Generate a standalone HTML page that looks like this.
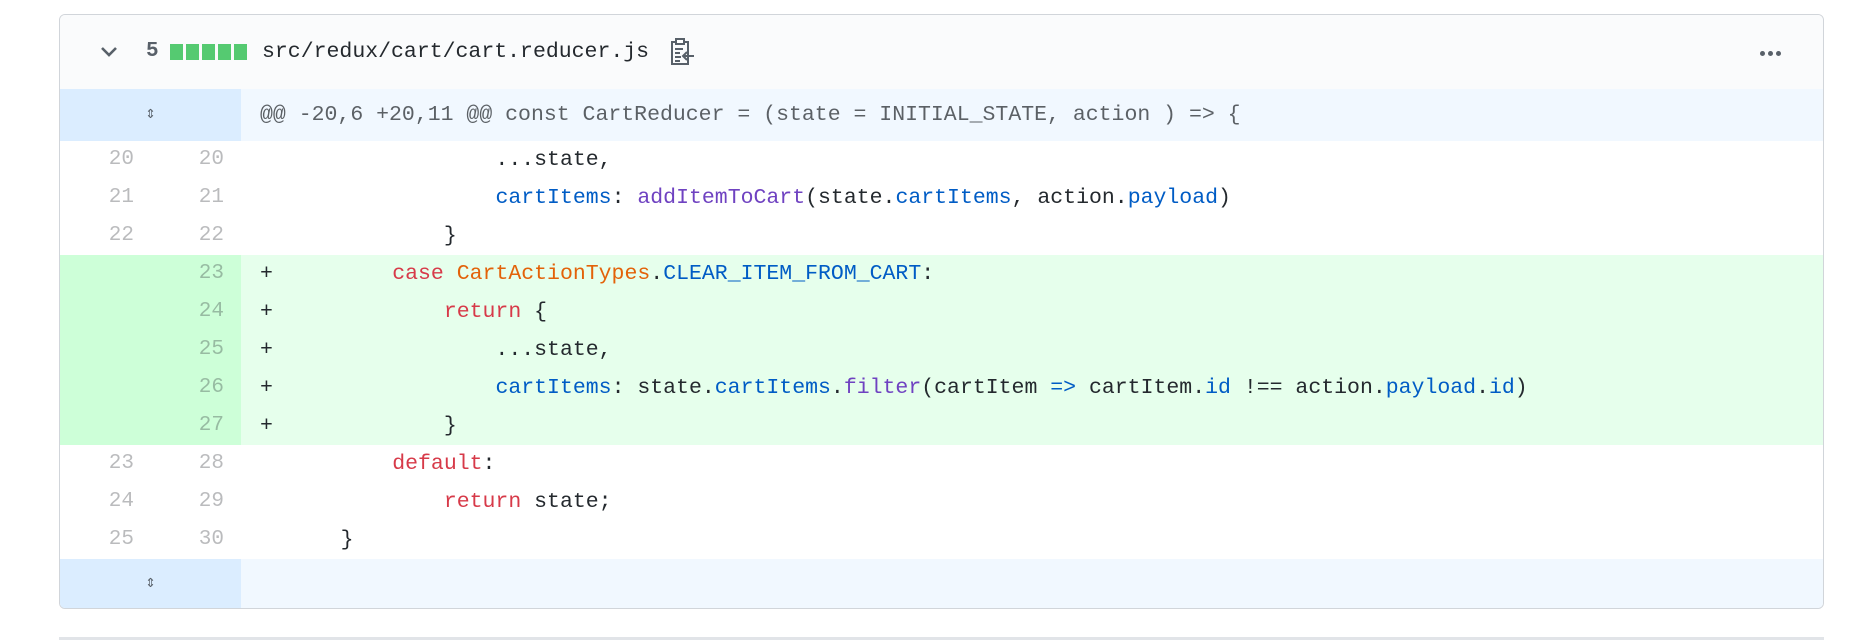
<!DOCTYPE html>
<html><head><meta charset="utf-8"><style>
body{margin:0;width:1864px;height:640px;background:#fff;position:relative;overflow:hidden;font-family:"Liberation Mono",monospace;}
.box{position:absolute;left:59px;top:14px;width:1763px;height:593px;border:1px solid #d1d5da;border-radius:6px;overflow:hidden;}
.hdr{position:absolute;left:0;top:0;right:0;height:74px;background:#fafbfc;border-bottom:1px solid #e1e4e8;}
.row{position:absolute;left:0;right:0;height:38px;}
.g1,.g2{position:absolute;top:0;height:38px;width:90px;text-align:right;color:rgba(27,31,35,.3);font-size:21px;line-height:38px;}
.g1{left:0;width:74px}.g2{left:90px;width:74px}
.code{position:absolute;left:181px;right:0;top:0;height:38px;font-size:21.5px;line-height:38px;color:#24292e;white-space:pre;}
.m{position:absolute;left:19px}.c{position:absolute;left:48px}
.add .gut{background:#cdffd8}.add .code{background:#e6ffec}
.gut{position:absolute;left:0;top:0;width:181px;height:38px}
.k{color:#d73a49}.o{color:#e36209}.b{color:#005cc5}.p{color:#6f42c1}
</style></head><body>
<div class="box">
 <div class="hdr">
  <svg style="position:absolute;left:40px;top:30px" width="18" height="14" viewBox="0 0 18 14"><path d="M2 3 L9 10 L16 3" stroke="#586069" stroke-width="2.6" fill="none"/></svg>
  <div style="position:absolute;left:86px;top:17px;font-size:21px;line-height:40px;font-weight:bold;color:#586069">5</div>
  <div style="position:absolute;left:110px;top:29px;height:16px;display:flex;gap:3px">
   <i style="width:13px;background:#2cbe4e;opacity:.8"></i><i style="width:13px;background:#2cbe4e;opacity:.8"></i><i style="width:13px;background:#2cbe4e;opacity:.8"></i><i style="width:13px;background:#2cbe4e;opacity:.8"></i><i style="width:13px;background:#2cbe4e;opacity:.8"></i></div>
  <div style="position:absolute;left:202px;top:17px;font-size:21.5px;line-height:40px;color:#24292e">src/redux/cart/cart.reducer.js</div>
  <svg style="position:absolute;left:610px;top:22px" width="26" height="30" viewBox="0 0 26 30"><rect x="2" y="5" width="16" height="22" fill="none" stroke="#586069" stroke-width="2"/><rect x="6" y="2" width="8" height="5" fill="#fff" stroke="#586069" stroke-width="2"/><path d="M5 12h8M5 16h5M5 20h6M5 24h5M24 19h-10M17 15l-4 4 4 4" stroke="#586069" stroke-width="2" fill="none"/></svg>
  <div style="position:absolute;left:1700px;top:36px;display:flex;gap:3px"><i style="width:5px;height:5px;border-radius:50%;background:#586069"></i><i style="width:5px;height:5px;border-radius:50%;background:#586069"></i><i style="width:5px;height:5px;border-radius:50%;background:#586069"></i></div>
 </div>
 <div class="row" style="top:74px;height:52px;background:#f1f8ff">
  <div style="position:absolute;left:0;top:0;width:181px;height:52px;background:#dbedff;text-align:center;line-height:52px;font-size:17px;color:#586069">⇕</div>
  <div style="position:absolute;left:200px;top:0;line-height:52px;font-size:21.5px;color:rgba(27,31,35,.7);white-space:pre">@@ -20,6 +20,11 @@ const CartReducer = (state = INITIAL_STATE, action ) =&gt; {</div>
 </div>
 <div class="row" style="top:126px"><div class="g1">20</div><div class="g2">20</div><div class="code"><span class="c">                ...state,</span></div></div>
 <div class="row" style="top:164px"><div class="g1">21</div><div class="g2">21</div><div class="code"><span class="c">                <span class="b">cartItems</span>: <span class="p">addItemToCart</span>(state.<span class="b">cartItems</span>, action.<span class="b">payload</span>)</span></div></div>
 <div class="row" style="top:202px"><div class="g1">22</div><div class="g2">22</div><div class="code"><span class="c">            }</span></div></div>
 <div class="row add" style="top:240px"><div class="gut"></div><div class="g2">23</div><div class="code"><span class="m">+</span><span class="c">        <span class="k">case</span> <span class="o">CartActionTypes</span>.<span class="b">CLEAR_ITEM_FROM_CART</span>:</span></div></div>
 <div class="row add" style="top:278px"><div class="gut"></div><div class="g2">24</div><div class="code"><span class="m">+</span><span class="c">            <span class="k">return</span> {</span></div></div>
 <div class="row add" style="top:316px"><div class="gut"></div><div class="g2">25</div><div class="code"><span class="m">+</span><span class="c">                ...state,</span></div></div>
 <div class="row add" style="top:354px"><div class="gut"></div><div class="g2">26</div><div class="code"><span class="m">+</span><span class="c">                <span class="b">cartItems</span>: state.<span class="b">cartItems</span>.<span class="p">filter</span>(cartItem <span class="b">=&gt;</span> cartItem.<span class="b">id</span> !== action.<span class="b">payload</span>.<span class="b">id</span>)</span></div></div>
 <div class="row add" style="top:392px"><div class="gut"></div><div class="g2">27</div><div class="code"><span class="m">+</span><span class="c">            }</span></div></div>
 <div class="row" style="top:430px"><div class="g1">23</div><div class="g2">28</div><div class="code"><span class="c">        <span class="k">default</span>:</span></div></div>
 <div class="row" style="top:468px"><div class="g1">24</div><div class="g2">29</div><div class="code"><span class="c">            <span class="k">return</span> state;</span></div></div>
 <div class="row" style="top:506px"><div class="g1">25</div><div class="g2">30</div><div class="code"><span class="c">    }</span></div></div>
 <div class="row" style="top:544px;height:49px;background:#f1f8ff"><div style="position:absolute;left:0;top:0;width:181px;height:49px;background:#dbedff;text-align:center;line-height:49px;font-size:17px;color:#586069">⇕</div></div>
</div>
<div style="position:absolute;left:59px;top:637px;width:1765px;height:3px;background:#e1e4e8"></div>
</body></html>
